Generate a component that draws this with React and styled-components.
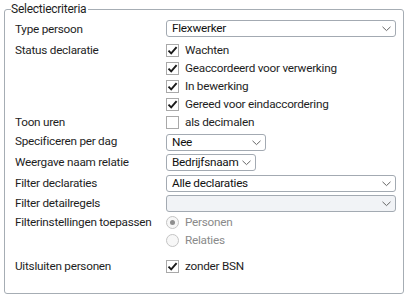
import React from 'react';
import styled, { createGlobalStyle, css } from 'styled-components';

const GlobalStyle = createGlobalStyle`
  body {
    margin: 0;
    background: #fff;
    font-family: Roboto, "Liberation Sans", sans-serif;
    font-size: 11.75px;
    letter-spacing: -0.25px;
    color: #1e1e1e;
  }
`;

const Page = styled.div`
  padding: 2px 4px 0 4px;
`;

const Fieldset = styled.fieldset`
  margin: 0;
  height: 292px;
  box-sizing: border-box;
  padding: 0 6px 0 6px;
  border: 1px solid #a6adb4;
  border-radius: 3px;
`;

const Legend = styled.legend`
  padding: 0 2px 0 0;
  font-size: 12px;
  line-height: 14px;
  color: #1e1e1e;
`;

const Form = styled.div`
  display: flex;
  flex-direction: column;
  padding: 3px 0 0 4px;
`;

const Row = styled.div`
  display: grid;
  grid-template-columns: 151px 1fr;
  align-items: start;
  margin-top: ${({ gap }) => gap || 0}px;
`;

const Label = styled.div`
  line-height: ${({ h }) => h || 18}px;
  white-space: nowrap;
`;

const Controls = styled.div`
  display: flex;
  flex-direction: column;
`;

const SelectBox = styled.div`
  position: relative;
  box-sizing: border-box;
  height: 17px;
  width: ${({ width }) => (width ? `${width}px` : '230px')};
  margin: ${({ m }) => m || '1px 0 4px'};
  padding: 0 18px 0 5px;
  border: 1px solid #a3aab2;
  border-radius: 3px;
  background: ${({ disabled }) => (disabled ? '#f1f3f6' : '#fff')};
  line-height: 15px;
  color: #111;
  white-space: nowrap;
`;

const Chevron = styled.svg`
  position: absolute;
  right: 4px;
  top: 5px;
`;

const CheckRow = styled.label`
  display: flex;
  align-items: center;
  height: 18px;
  gap: 6px;
  color: ${({ disabled }) => (disabled ? '#8a8a8a' : 'inherit')};
  white-space: nowrap;
`;

const Box = styled.span`
  box-sizing: border-box;
  width: 13px;
  height: 13px;
  flex: none;
  display: flex;
  align-items: center;
  justify-content: center;
  border: 1px solid #a9a9a9;
  background: #fff;
  ${({ round }) =>
    round &&
    css`
      border-radius: 50%;
      border-color: #c4c4c4;
      background: #f7f7f7;
    `};
`;

const Dot = styled.span`
  width: 5px;
  height: 5px;
  border-radius: 50%;
  background: #8f8f8f;
`;

const Select = ({ value, width, disabled, m }) => (
  <SelectBox width={width} disabled={disabled} m={m}>
    {value}
    <Chevron width="9" height="6" viewBox="0 0 9 6">
      <path d="M0.5 0.8 L4.5 4.6 L8.5 0.8" fill="none" stroke="#666" strokeWidth="1" />
    </Chevron>
  </SelectBox>
);

const Check = ({ checked, children }) => (
  <CheckRow>
    <Box>
      {checked && (
        <svg width="11" height="11" viewBox="0 0 11 11">
          <path d="M1.5 5.6 L4.2 8.3 L9.6 2.2" fill="none" stroke="#1a1a1a" strokeWidth="1.9" />
        </svg>
      )}
    </Box>
    {children}
  </CheckRow>
);

const Radio = ({ checked, children }) => (
  <CheckRow disabled>
    <Box round>{checked && <Dot />}</Box>
    {children}
  </CheckRow>
);

const App = () => (
  <Page>
    <GlobalStyle />
    <Fieldset>
      <Legend>Selectiecriteria</Legend>
      <Form>
        <Row>
          <Label h={21}>Type persoon</Label>
          <Controls>
            <Select value="Flexwerker" />
          </Controls>
        </Row>
        <Row>
          <Label>Status declaratie</Label>
          <Controls>
            <Check checked>Wachten</Check>
            <Check checked>Geaccordeerd voor verwerking</Check>
            <Check checked>In bewerking</Check>
            <Check checked>Gereed voor eindaccordering</Check>
          </Controls>
        </Row>
        <Row>
          <Label>Toon uren</Label>
          <Controls>
            <Check>als decimalen</Check>
          </Controls>
        </Row>
        <Row>
          <Label h={21}>Specificeren per dag</Label>
          <Controls>
            <Select value="Nee" width={100} m="3px 0 1px" />
          </Controls>
        </Row>
        <Row>
          <Label h={21}>Weergave naam relatie</Label>
          <Controls>
            <Select value="Bedrijfsnaam" width={90} m="2px 0 2px" />
          </Controls>
        </Row>
        <Row>
          <Label h={20}>Filter declaraties</Label>
          <Controls>
            <Select value="Alle declaraties" m="2px 0 1px" />
          </Controls>
        </Row>
        <Row>
          <Label h={20}>Filter detailregels</Label>
          <Controls>
            <Select value="" disabled m="2px 0 1px" />
          </Controls>
        </Row>
        <Row>
          <Label>Filterinstellingen toepassen</Label>
          <Controls>
            <Radio checked>Personen</Radio>
            <Radio>Relaties</Radio>
          </Controls>
        </Row>
        <Row gap={8}>
          <Label>Uitsluiten personen</Label>
          <Controls>
            <Check checked>zonder BSN</Check>
          </Controls>
        </Row>
      </Form>
    </Fieldset>
  </Page>
);

export default App;
